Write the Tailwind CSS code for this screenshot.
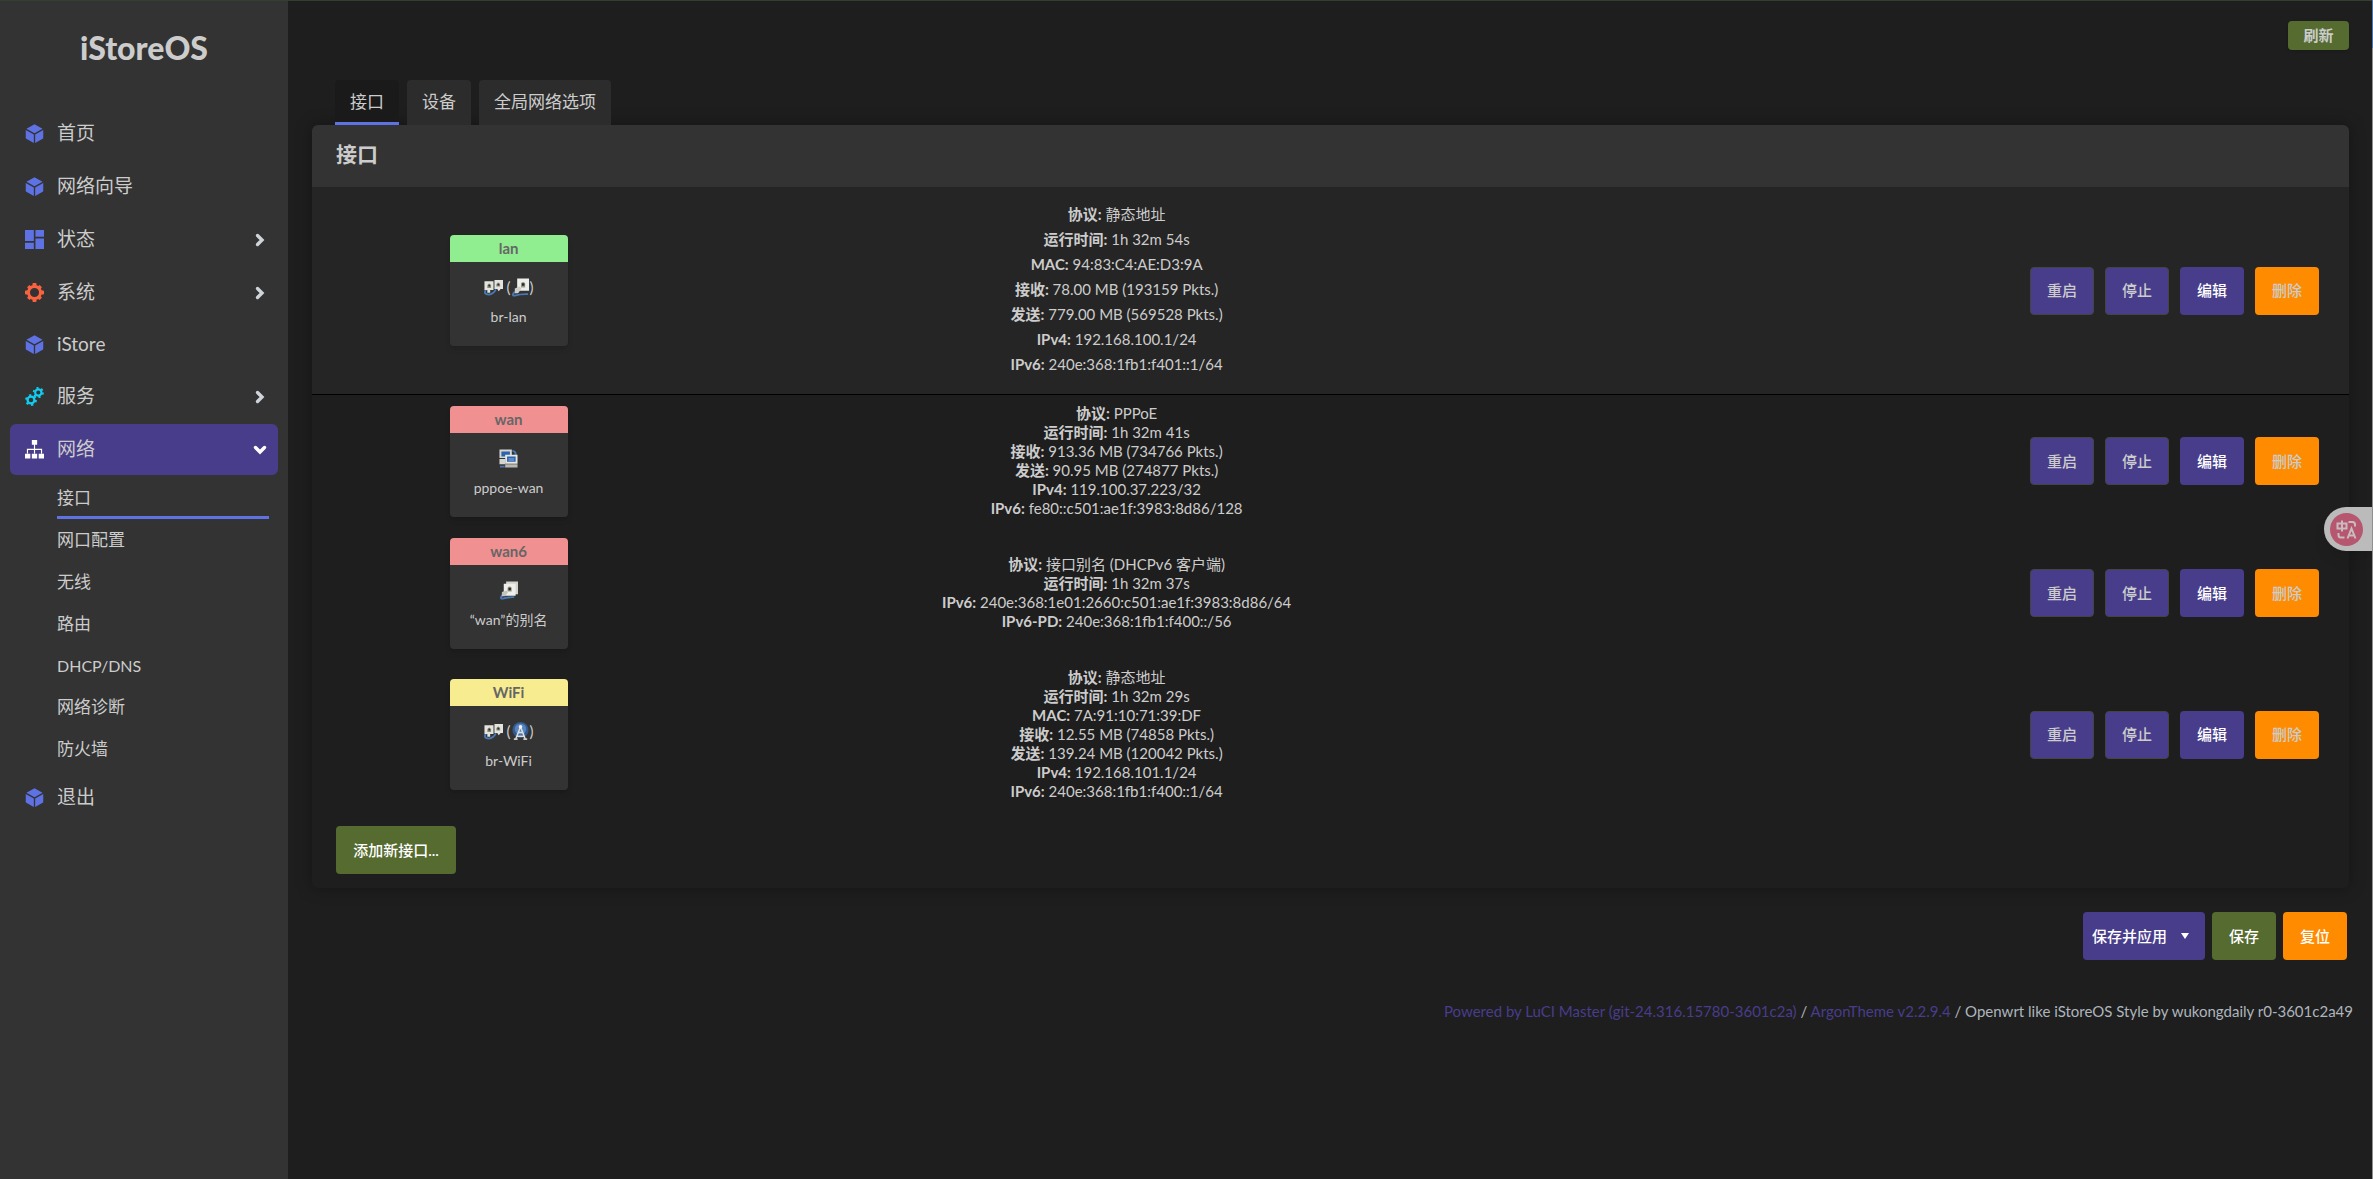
<!DOCTYPE html>
<html lang="zh-CN">
<head>
    <meta charset="UTF-8">
    <meta name="viewport" content="width=device-width, initial-scale=1">
    <title>iStoreOS - 接口</title>
    <script src="https://cdn.jsdelivr.net/npm/@tailwindcss/browser@4"></script>
</head>
<body class="min-h-screen flex bg-[#1e1e1e] text-[#cccccc] text-[15px] font-['Lato','Noto_Sans_CJK_SC',sans-serif] border-t border-[#33402b]">

<!-- shared icons -->
<svg class="hidden" aria-hidden="true">
    <symbol id="cube" viewBox="0 0 20 20">
        <path d="M10 0.2l8.500 4.700-8.500 4.800-8.500-4.800zM.800 6.200l8.500 4.800v9L1.400 15.600Q.800 15.200.800 14.400zM19.200 6.200l-8.500 4.800v9l7.900-4.400q.6-.4.6-1.200z"/>
    </symbol>
    <symbol id="blocks" viewBox="0 0 20 20">
        <path d="M0 0h9.300v11.500H0zM11 0h9v7h-9zM0 13.500h9.300V20H0zM11 9h9v11h-9z"/>
    </symbol>
    <symbol id="gear" viewBox="0 0 20 20">
        <circle cx="10" cy="10" r="6.300" fill="none" stroke="currentColor" stroke-width="3"/>
        <path d="M8.200 0h3.600l.6 3H7.600zM8.200 20h3.600l.6-3H7.600zM0 8.200v3.600l3 .6V7.600zM20 8.200v3.600l-3 .6V7.600zM2.200 4.600l2.400-2.400 2.800 2-3.200 3.200zM17.800 4.600l-2.400-2.400-2.800 2 3.200 3.200zM2.200 15.400l2.400 2.400 2.800-2-3.200-3.200zM17.800 15.400l-2.400 2.400-2.800-2 3.200-3.200z"/>
    </symbol>
    <symbol id="gears" viewBox="0 0 20 20">
        <g fill="none" stroke="currentColor">
            <circle cx="6.300" cy="13.700" r="3.600" stroke-width="2.400"/>
            <circle cx="6.300" cy="13.700" r="5.200" stroke-width="2" stroke-dasharray="2.400 3.040"/>
            <circle cx="14" cy="5.800" r="3.300" stroke-width="2.200"/>
            <circle cx="14" cy="5.800" r="4.900" stroke-width="1.900" stroke-dasharray="2.200 2.930"/>
        </g>
    </symbol>
    <symbol id="sitemap" viewBox="0 0 20 20">
        <path d="M7.200 0h5.600v5H7.200zM0 14.500h5.600v5H0zM7.200 14.500h5.600v5H7.200zM14.400 14.500H20v5h-5.600zM9.400 5h1.200v4.200h7.400v5h-1.200v-3.800h-6.200v3.800H9.400v-3.800H3.200v3.800H2v-5h7.400z"/>
    </symbol>
    <symbol id="chevron" viewBox="0 0 12 14">
        <path d="M3.500 2.500L8 7l-4.500 4.500" fill="none" stroke="currentColor" stroke-width="3.400" stroke-linecap="round"/>
    </symbol>
    <symbol id="bridge" viewBox="0 0 20 20">
        <path d="M2 12Q-1 17.500 5 17.500 10 17 12.500 12" fill="none" stroke="#4a78b5" stroke-width="2"/>
        <path d="M.500 3.500h9.500v9H6.500v3h-3v-3h-3zM11 2h9v9.500h-2.500l-2 2.500-1.500-2.500H11z" fill="#e4e4df"/>
        <path d="M3.500 7.500Q5.500 4 7.500 7.500v3h-4zM13 6.500q2-3.500 4 0V9h-4z" fill="#8a8a80"/>
        <path d="M4.700 7h1.800v2H4.700zM14.200 6H16v2h-1.800z" fill="#2e2a1c"/>
    </symbol>
    <symbol id="ethernet" viewBox="0 0 20 20">
        <path d="M4 14.500Q0 18.500 4 18.500q6-1.800 14-1.500" fill="none" stroke="#4a78b5" stroke-width="2"/>
        <path d="M6.500.500H19v13H6.500z" fill="#eeeeea"/>
        <path d="M10.500 5.500q2.200-2.500 4.400 0V10h-4.400z" fill="#99998a"/>
        <path d="M11.500 5.500h2.600v2.700h-2.600z" fill="#2e2a1c"/>
        <path d="M4 11l5-2 2 2-3.500 5H4z" fill="#cfcfca"/>
    </symbol>
    <symbol id="alias" viewBox="0 0 20 20">
        <path d="M4 14.500Q0 18.500 4 18.500q6-1.800 12-1.500" fill="none" stroke="#4a78b5" stroke-width="2"/>
        <path d="M7.500.500h12.500v13.500h-12.500z" fill="#d3d3cc"/>
        <path d="M5 3h12.500v12.500H5z" fill="#eeeeea"/>
        <path d="M9 7q2.200-2.500 4.400 0v4H9z" fill="#99998a"/>
        <path d="M10 7.200h2.500v2.500H10z" fill="#2e2a1c"/>
        <path d="M3 11.500l5-1.500 1.500 2L6 16H3z" fill="#c4c4be"/>
    </symbol>
    <symbol id="tunnel" viewBox="0 0 20 20">
        <path d="M14 2q4 0 3.500 5M1 18.500h5" fill="none" stroke="#4a78b5" stroke-width="2"/>
        <path d="M.500.500h13v9H.500zM.500 10.500h6V16h-6z" fill="#d5d5cf"/>
        <path d="M2.500 2.500h9v5.500h-9z" fill="#2e62ad"/>
        <path d="M6.500 6h13v9.500h-13z" fill="#e6e6e1"/>
        <path d="M8.500 8h9v5.500h-9z" fill="#2e62ad"/>
        <path d="M10 9.500h6v3h-6z" fill="#5d8ac9"/>
        <path d="M6.500 16h13v3.500h-13z" fill="#b9b9b2"/>
    </symbol>
    <symbol id="wifi" viewBox="0 0 20 20">
        <circle cx="10" cy="8.500" r="8.500" fill="#34598c"/>
        <circle cx="10" cy="7.500" r="6" fill="#5584c2"/>
        <path d="M10 5L5 18M10 5l5 13M8 11h4M6.500 15h7" fill="none" stroke="#dededa" stroke-width="1.600"/>
        <circle cx="10" cy="5" r="1.900" fill="#f2f2f0"/>
        <path d="M3 17h4v2H3zM13 17h4v2h-4z" fill="#c9c9c4"/>
    </symbol>
</svg>

<aside class="w-72 shrink-0 bg-[#333333]">
    <a href="#" class="block h-[107px] pt-[27px] text-center text-[32px] leading-10 font-black">iStoreOS</a>
    <nav class="px-[10px] text-[19px]">
        <a href="#" class="flex items-center h-[51px] mb-0.5 pl-[15px] pr-3 gap-[13px]"><svg class="size-[19px] fill-[#5e72e4]"><use href="#cube"/></svg>首页</a>
        <a href="#" class="flex items-center h-[51px] mb-0.5 pl-[15px] pr-3 gap-[13px]"><svg class="size-[19px] fill-[#5e72e4]"><use href="#cube"/></svg>网络向导</a>
        <a href="#" class="flex items-center h-[51px] mb-0.5 pl-[15px] pr-3 gap-[13px]"><svg class="size-[19px] fill-[#5e72e4]"><use href="#blocks"/></svg>状态<svg class="w-3 h-3.5 ml-auto text-[#ced4da]"><use href="#chevron"/></svg></a>
        <a href="#" class="flex items-center h-[51px] mb-0.5 pl-[15px] pr-3 gap-[13px]"><svg class="size-[19px] fill-[#fb6340] text-[#fb6340]"><use href="#gear"/></svg>系统<svg class="w-3 h-3.5 ml-auto text-[#ced4da]"><use href="#chevron"/></svg></a>
        <a href="#" class="flex items-center h-[49px] mb-0.5 pl-[15px] pr-3 gap-[13px]"><svg class="size-[19px] fill-[#5e72e4]"><use href="#cube"/></svg>iStore</a>
        <a href="#" class="flex items-center h-[51px] mb-0.5 pl-[15px] pr-3 gap-[13px]"><svg class="size-[19px] text-[#11cdef]"><use href="#gears"/></svg>服务<svg class="w-3 h-3.5 ml-auto text-[#ced4da]"><use href="#chevron"/></svg></a>
        <a href="#" class="flex items-center h-[51px] pl-[15px] pr-3 gap-[13px] rounded-md bg-[#483d8b]"><svg class="size-[19px] fill-white"><use href="#sitemap"/></svg>网络<svg class="w-3 h-3.5 ml-auto text-white rotate-90"><use href="#chevron"/></svg></a>
        <div class="pl-[47px] pr-[9px] mb-0.5 text-[17px]">
            <a href="#" class="flex items-center h-[44px] pt-1 border-b-[3px] border-[#5e72e4]">接口</a>
            <a href="#" class="flex items-center h-[42px]">网口配置</a>
            <a href="#" class="flex items-center h-[42px]">无线</a>
            <a href="#" class="flex items-center h-[42px]">路由</a>
            <a href="#" class="flex items-center h-[41px] text-base">DHCP/DNS</a>
            <a href="#" class="flex items-center h-[42px]">网络诊断</a>
            <a href="#" class="flex items-center h-[42px]">防火墙</a>
        </div>
        <a href="#" class="flex items-center h-[51px] pl-[15px] pr-3 gap-[13px]"><svg class="size-[19px] fill-[#5e72e4]"><use href="#cube"/></svg>退出</a>
    </nav>
</aside>

<main class="flex-1 min-w-0 px-6">
    <header class="flex justify-end h-[79px] pt-5">
        <button class="w-[61px] h-[29px] rounded bg-[#556b2f] font-bold shadow">刷新</button>
    </header>

    <div class="flex gap-2 pl-[23px] text-[17px]">
        <a href="#" class="h-[45px] px-[15px] pt-[9px] rounded-t bg-[#1a1a1a] border-b-[3px] border-[#5e72e4]">接口</a>
        <a href="#" class="h-[45px] px-[15px] pt-[9px] rounded-t bg-[#2c2c2c]">设备</a>
        <a href="#" class="h-[45px] px-[15px] pt-[9px] rounded-t bg-[#2c2c2c]">全局网络选项</a>
    </div>

    <section class="rounded-md pb-[14px] shadow-[0_0_16px_rgba(0,0,0,0.35)]">
        <h3 class="h-[62px] px-6 rounded-t-md bg-[#333333] text-[21px] leading-[58px] font-bold">接口</h3>
        <table class="w-full table-fixed text-center leading-[19px]">
            <colgroup>
                <col class="w-[19.3%]">
                <col class="w-[40.4%]">
                <col>
            </colgroup>
            <tbody>
                <tr class="bg-[#252525] border-b border-black">
                    <td>
                        <div class="w-[118px] h-[111px] mx-auto rounded bg-[#333333] overflow-hidden shadow-md">
                            <div class="h-[27px] leading-[27px] bg-[#90ee90] text-[#666666] font-bold">lan</div>
                            <div class="flex justify-center items-center h-[47px] pt-1 gap-1"><svg class="size-[19px]"><use href="#bridge"/></svg><span class="flex items-center">(<svg class="size-[19px]"><use href="#ethernet"/></svg>)</span></div>
                            <div class="text-[14px] leading-4">br-lan</div>
                        </div>
                    </td>
                    <td class="pt-[15px] pb-[17px] leading-[25px]">
                        <b>协议:</b> 静态地址<br>
                        <b>运行时间:</b> 1h 32m 54s<br>
                        <b>MAC:</b> 94:83:C4:AE:D3:9A<br>
                        <b>接收:</b> 78.00 MB (193159 Pkts.)<br>
                        <b>发送:</b> 779.00 MB (569528 Pkts.)<br>
                        <b>IPv4:</b> 192.168.100.1/24<br>
                        <b>IPv6:</b> 240e:368:1fb1:f401::1/64
                    </td>
                    <td>
                        <div class="flex justify-end gap-[11px] pr-[30px] font-medium">
                            <button class="w-16 h-12 rounded border border-[#444444] bg-[#483d8b]">重启</button>
                            <button class="w-16 h-12 rounded border border-[#444444] bg-[#483d8b]">停止</button>
                            <button class="w-16 h-12 rounded bg-[#483d8b] text-white">编辑</button>
                            <button class="w-16 h-12 rounded bg-[#ff8c00]">删除</button>
                        </div>
                    </td>
                </tr>
                <tr>
                    <td>
                        <div class="w-[118px] h-[111px] mx-auto rounded bg-[#333333] overflow-hidden shadow-md">
                            <div class="h-[27px] leading-[27px] bg-[#f09090] text-[#666666] font-bold">wan</div>
                            <div class="flex justify-center items-center h-[47px] pt-1"><svg class="size-[19px]"><use href="#tunnel"/></svg></div>
                            <div class="text-[14px] leading-4">pppoe-wan</div>
                        </div>
                    </td>
                    <td class="py-[9px]">
                        <b>协议:</b> PPPoE<br>
                        <b>运行时间:</b> 1h 32m 41s<br>
                        <b>接收:</b> 913.36 MB (734766 Pkts.)<br>
                        <b>发送:</b> 90.95 MB (274877 Pkts.)<br>
                        <b>IPv4:</b> 119.100.37.223/32<br>
                        <b>IPv6:</b> fe80::c501:ae1f:3983:8d86/128
                    </td>
                    <td>
                        <div class="flex justify-end gap-[11px] pr-[30px] font-medium">
                            <button class="w-16 h-12 rounded border border-[#444444] bg-[#483d8b]">重启</button>
                            <button class="w-16 h-12 rounded border border-[#444444] bg-[#483d8b]">停止</button>
                            <button class="w-16 h-12 rounded bg-[#483d8b] text-white">编辑</button>
                            <button class="w-16 h-12 rounded bg-[#ff8c00]">删除</button>
                        </div>
                    </td>
                </tr>
                <tr class="h-[132px]">
                    <td>
                        <div class="w-[118px] h-[111px] mx-auto rounded bg-[#333333] overflow-hidden shadow-md">
                            <div class="h-[27px] leading-[27px] bg-[#f09090] text-[#666666] font-bold">wan6</div>
                            <div class="flex justify-center items-center h-[47px] pt-1"><svg class="size-[19px]"><use href="#alias"/></svg></div>
                            <div class="text-[14px] leading-4">“wan”的别名</div>
                        </div>
                    </td>
                    <td class="py-[9px]">
                        <b>协议:</b> 接口别名 (DHCPv6 客户端)<br>
                        <b>运行时间:</b> 1h 32m 37s<br>
                        <b>IPv6:</b> 240e:368:1e01:2660:c501:ae1f:3983:8d86/64<br>
                        <b>IPv6-PD:</b> 240e:368:1fb1:f400::/56
                    </td>
                    <td>
                        <div class="flex justify-end gap-[11px] pr-[30px] font-medium">
                            <button class="w-16 h-12 rounded border border-[#444444] bg-[#483d8b]">重启</button>
                            <button class="w-16 h-12 rounded border border-[#444444] bg-[#483d8b]">停止</button>
                            <button class="w-16 h-12 rounded bg-[#483d8b] text-white">编辑</button>
                            <button class="w-16 h-12 rounded bg-[#ff8c00]">删除</button>
                        </div>
                    </td>
                </tr>
                <tr>
                    <td>
                        <div class="w-[118px] h-[111px] mx-auto rounded bg-[#333333] overflow-hidden shadow-md">
                            <div class="h-[27px] leading-[27px] bg-[#f8ec90] text-[#666666] font-bold">WiFi</div>
                            <div class="flex justify-center items-center h-[47px] pt-1 gap-1"><svg class="size-[19px]"><use href="#bridge"/></svg><span class="flex items-center">(<svg class="size-[19px]"><use href="#wifi"/></svg>)</span></div>
                            <div class="text-[14px] leading-4">br-WiFi</div>
                        </div>
                    </td>
                    <td class="py-[9px]">
                        <b>协议:</b> 静态地址<br>
                        <b>运行时间:</b> 1h 32m 29s<br>
                        <b>MAC:</b> 7A:91:10:71:39:DF<br>
                        <b>接收:</b> 12.55 MB (74858 Pkts.)<br>
                        <b>发送:</b> 139.24 MB (120042 Pkts.)<br>
                        <b>IPv4:</b> 192.168.101.1/24<br>
                        <b>IPv6:</b> 240e:368:1fb1:f400::1/64
                    </td>
                    <td>
                        <div class="flex justify-end gap-[11px] pr-[30px] font-medium">
                            <button class="w-16 h-12 rounded border border-[#444444] bg-[#483d8b]">重启</button>
                            <button class="w-16 h-12 rounded border border-[#444444] bg-[#483d8b]">停止</button>
                            <button class="w-16 h-12 rounded bg-[#483d8b] text-white">编辑</button>
                            <button class="w-16 h-12 rounded bg-[#ff8c00]">删除</button>
                        </div>
                    </td>
                </tr>
            </tbody>
        </table>
        <button class="w-[120px] h-12 mt-4 ml-6 rounded bg-[#556b2f] text-white font-medium">添加新接口...</button>
    </section>

    <div class="flex justify-end gap-[7px] mt-6 pr-0.5 text-white font-medium">
        <button class="flex items-center h-12 pl-[9px] pr-[15px] gap-[13px] rounded bg-[#483d8b]">保存并应用<svg class="w-2.5 h-1.5 fill-white" viewBox="0 0 10 6"><path d="M1 0h8L5 6z"/></svg></button>
        <button class="w-16 h-12 rounded bg-[#556b2f]">保存</button>
        <button class="w-16 h-12 rounded bg-[#ff8c00]">复位</button>
    </div>

    <footer class="mt-[39px] -mr-1 text-right leading-6 text-[#adb5bd]">
        <a href="#" class="text-[#483d8b]">Powered by LuCI Master (git-24.316.15780-3601c2a)</a> /
        <a href="#" class="text-[#483d8b]">ArgonTheme v2.2.9.4</a> /
        Openwrt like iStoreOS Style by wukongdaily r0-3601c2a49
    </footer>
</main>

<!-- translate widget docked to the right edge -->
<button aria-label="翻译" class="fixed right-0 top-[507px] w-[49px] h-11 pl-[6px] rounded-l-full bg-[#bbbbbb] shadow-lg">
    <svg class="size-[33px]" viewBox="0 0 33 33" fill="none" stroke="#c9bcc0" stroke-width="2">
        <circle cx="16.500" cy="16.500" r="16.500" fill="#b6566f" stroke="none"/>
        <path d="M7.500 10.500h9v5h-9zM12 7.500v11M18.500 9h4q2.500 0 2.500 2.500v2M8.500 20v2q0 2.500 2.500 2.500h3.500M17.500 25.500l4-10 4 10M19 22.500h5"/>
    </svg>
</button>
<div class="fixed right-0 top-0 w-px h-full bg-[#8f8f8f]"><div class="h-12 bg-[#4a78a8]"></div></div>

</body>
</html>
